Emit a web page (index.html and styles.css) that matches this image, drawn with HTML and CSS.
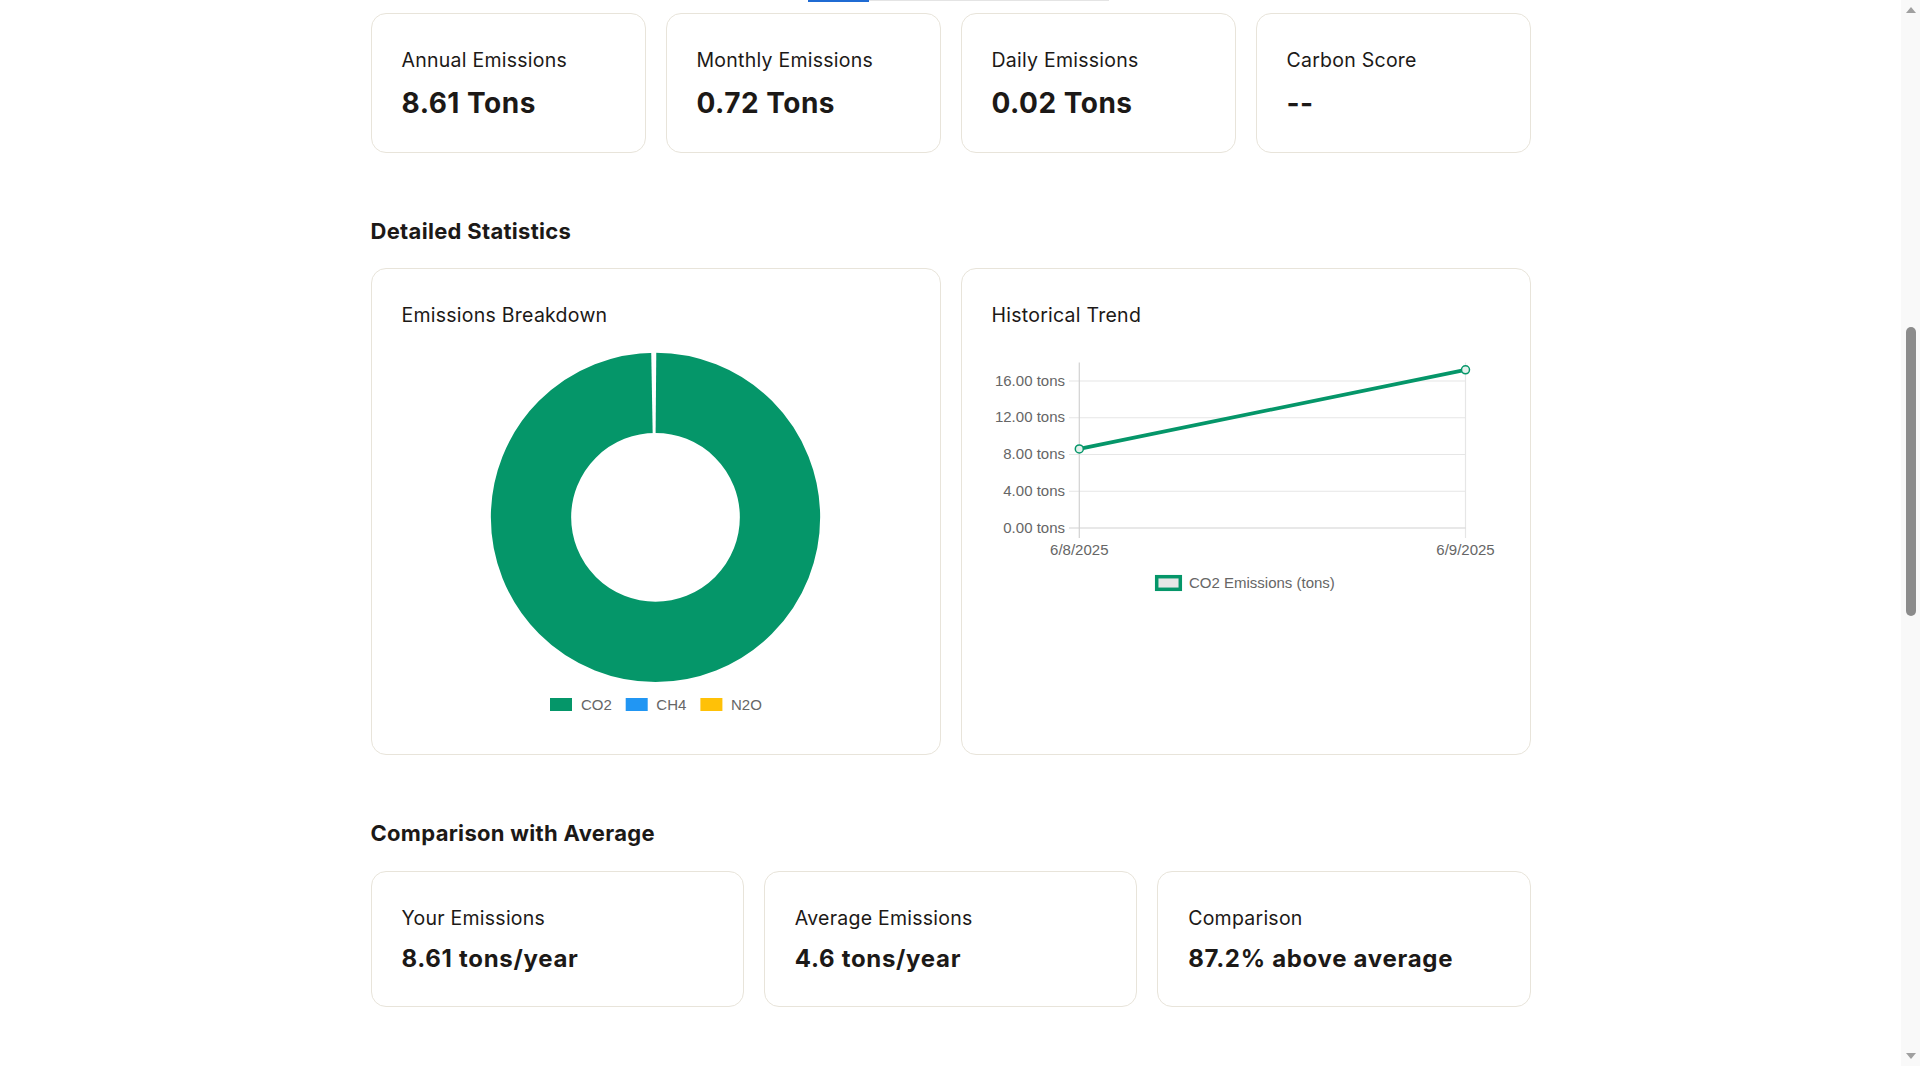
FILE: index.html
```html
<!DOCTYPE html>
<html lang="en">
<head>
<meta charset="utf-8">
<title>Emissions Dashboard</title>
<link rel="stylesheet" href="styles.css">
</head>
<body>
<div class="app">
  <main class="page">
    <div class="container">
      <div class="tab-edge"><span class="tab-active"></span><span class="tab-rest"></span></div>

      <div class="stats-grid four">
        <div class="card stat-card">
          <h3 class="stat-label">Annual Emissions</h3>
          <p class="stat-value">8.61 Tons</p>
        </div>
        <div class="card stat-card">
          <h3 class="stat-label">Monthly Emissions</h3>
          <p class="stat-value">0.72 Tons</p>
        </div>
        <div class="card stat-card">
          <h3 class="stat-label">Daily Emissions</h3>
          <p class="stat-value">0.02 Tons</p>
        </div>
        <div class="card stat-card">
          <h3 class="stat-label">Carbon Score</h3>
          <p class="stat-value">--</p>
        </div>
      </div>

      <section class="section">
        <h2 class="section-title">Detailed Statistics</h2>
        <div class="charts-grid">
          <div class="card chart-card">
            <h3 class="chart-title">Emissions Breakdown</h3>
            <svg class="chart" width="510" height="380" viewBox="0 0 510 380">
              <circle cx="254.5" cy="172.3" r="124.5" fill="none" stroke="#059669" stroke-width="80.3"/>
              <polygon points="250.2,6 255.3,6 254.6,90 251.7,90" fill="#ffffff"/>
              <rect x="149" y="353" width="22" height="13" fill="#059669"/>
              <text class="legend-text" x="180" y="365">CO2</text>
              <rect x="224.7" y="353" width="22" height="13" fill="#2196f3"/>
              <text class="legend-text" x="255.3" y="365">CH4</text>
              <rect x="299.4" y="353" width="22" height="13" fill="#ffc107"/>
              <text class="legend-text" x="330" y="365">N2O</text>
            </svg>
          </div>
          <div class="card chart-card">
            <h3 class="chart-title">Historical Trend</h3>
            <svg class="chart" width="510" height="380" viewBox="0 0 510 380">
              <g class="grid">
                <line x1="78" y1="36" x2="474.5" y2="36"/>
                <line x1="78" y1="72.75" x2="474.5" y2="72.75"/>
                <line x1="78" y1="109.5" x2="474.5" y2="109.5"/>
                <line x1="78" y1="146.25" x2="474.5" y2="146.25"/>
                <line x1="474.5" y1="17.6" x2="474.5" y2="193"/>
              </g>
              <g class="axis">
                <line x1="78" y1="183" x2="474.5" y2="183"/>
                <line x1="88.3" y1="17.6" x2="88.3" y2="193"/>
              </g>
              <g class="tick-text" text-anchor="end">
                <text x="74" y="40.5">16.00 tons</text>
                <text x="74" y="77.25">12.00 tons</text>
                <text x="74" y="114">8.00 tons</text>
                <text x="74" y="150.75">4.00 tons</text>
                <text x="74" y="187.5">0.00 tons</text>
              </g>
              <g class="tick-text" text-anchor="middle">
                <text x="88.3" y="210">6/8/2025</text>
                <text x="474.5" y="210">6/9/2025</text>
              </g>
              <line x1="88.3" y1="103.9" x2="474.5" y2="24.8" stroke="#059669" stroke-width="3.75" stroke-linecap="round"/>
              <circle cx="88.3" cy="103.9" r="4" fill="#e3f1ec" stroke="#059669" stroke-width="1.5"/>
              <circle cx="474.5" cy="24.8" r="4" fill="#e3f1ec" stroke="#059669" stroke-width="1.5"/>
              <rect x="165.7" y="231.7" width="23.6" height="12.6" fill="#e6e6e6" stroke="#059669" stroke-width="3.5"/>
              <text class="legend-text" x="198" y="243.3">CO2 Emissions (tons)</text>
            </svg>
          </div>
        </div>
      </section>

      <section class="section">
        <h2 class="section-title">Comparison with Average</h2>
        <div class="stats-grid three">
          <div class="card stat-card compare">
            <h3 class="stat-label">Your Emissions</h3>
            <p class="stat-value">8.61 tons/year</p>
          </div>
          <div class="card stat-card compare">
            <h3 class="stat-label">Average Emissions</h3>
            <p class="stat-value">4.6 tons/year</p>
          </div>
          <div class="card stat-card compare">
            <h3 class="stat-label">Comparison</h3>
            <p class="stat-value">87.2% above average</p>
          </div>
        </div>
      </section>
    </div>
  </main>

  <div class="scrollbar" aria-hidden="true">
    <span class="scroll-arrow up"></span>
    <span class="scroll-thumb"></span>
    <span class="scroll-fill"></span>
    <span class="scroll-arrow down"></span>
  </div>
</div>
</body>
</html>
```

FILE: styles.css
```css
html, body {
  margin: 0;
  padding: 0;
  height: 100%;
  overflow: hidden;
  background: #ffffff;
}

body {
  font-family: "Inter", "Noto Sans", sans-serif;
  color: #1c1917;
}

.app {
  display: flex;
  height: 100vh;
}

.page {
  flex: 1;
  min-width: 0;
}

.container {
  width: 1160px;
  margin: 0 auto;
}

/* bottom edge of the tab bar, scrolled mostly out of view */
.tab-edge {
  display: flex;
  margin-left: 437px;
  width: 301px;
  height: 2px;
  margin-bottom: 11px;
}

.tab-active {
  width: 61px;
  background: #1f6bd3;
}

.tab-rest {
  flex: 1;
  height: 1px;
  background: #e4e4e4;
}

.stats-grid {
  display: grid;
  gap: 20px;
}

.stats-grid.four {
  grid-template-columns: repeat(4, 1fr);
}

.stats-grid.three {
  grid-template-columns: repeat(3, 1fr);
}

.card {
  background: #ffffff;
  border: 1px solid #e8e4da;
  border-radius: 15px;
  padding: 29px;
}

.stat-card {
  padding-left: 30px;
}

.stat-label,
.chart-title {
  margin: 0;
  padding-top: 2px;
  font-size: 19.5px;
  line-height: 30px;
  font-weight: 400;
  letter-spacing: 0.25px;
  color: #1c1917;
}

.stat-label {
  margin-bottom: 8px;
}

.stat-value {
  margin: 0;
  font-size: 28px;
  line-height: 40px;
  font-weight: 700;
  letter-spacing: 0.5px;
  color: #1c1917;
}

.stat-card.compare .stat-value {
  font-size: 24px;
  line-height: 36px;
  letter-spacing: 0.7px;
}

.section {
  margin-top: 65px;
}

.section-title {
  margin: 0 0 24px;
  font-size: 22px;
  line-height: 26.4px;
  font-weight: 700;
  letter-spacing: 0.3px;
  color: #1c1917;
}

.charts-grid {
  display: grid;
  grid-template-columns: 1fr 1fr;
  gap: 20px;
}

.chart-title {
  margin-bottom: 15px;
  padding-left: 1px;
}

.chart {
  display: block;
}

.grid line {
  stroke: #e6e6e6;
  stroke-width: 1.2;
}

.axis line {
  stroke: #d2d2d2;
  stroke-width: 1.2;
}

.tick-text text,
.legend-text {
  font-family: "Liberation Sans", Arial, sans-serif;
  font-size: 15px;
  fill: #666666;
}

/* classic browser scrollbar */
.scrollbar {
  width: 19px;
  height: 100vh;
  background: #f9f9f9;
  display: flex;
  flex-direction: column;
  align-items: center;
}

.scroll-arrow {
  width: 0;
  height: 0;
  border-left: 5px solid transparent;
  border-right: 5px solid transparent;
}

.scroll-arrow.up {
  margin-top: 7px;
  border-bottom: 6px solid #a0a0a0;
}

.scroll-arrow.down {
  margin-bottom: 7px;
  border-top: 6px solid #a0a0a0;
}

.scroll-thumb {
  margin-top: 314px;
  width: 10px;
  height: 289px;
  border-radius: 5px;
  background: #8c8c8c;
}

.scroll-fill {
  flex: 1;
}
```
